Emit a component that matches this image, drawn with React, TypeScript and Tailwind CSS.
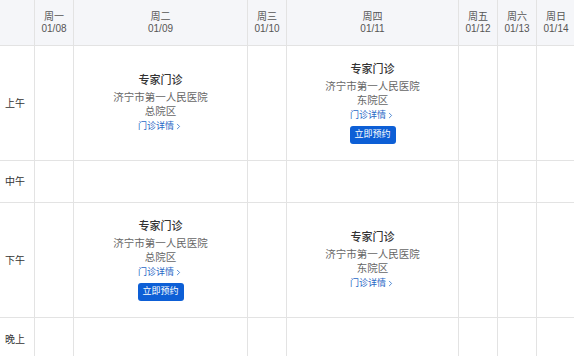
import { ChevronRight } from 'lucide-react';

interface Clinic {
  campus: string;
  canBook: boolean;
}

const days = [
  { name: '周一', date: '01/08' },
  { name: '周二', date: '01/09' },
  { name: '周三', date: '01/10' },
  { name: '周四', date: '01/11' },
  { name: '周五', date: '01/12' },
  { name: '周六', date: '01/13' },
  { name: '周日', date: '01/14' },
];

const slots = ['上午', '中午', '下午', '晚上'];

// schedule[slot][dayIndex]
const schedule: Record<string, Record<number, Clinic>> = {
  上午: {
    1: { campus: '总院区', canBook: false },
    3: { campus: '东院区', canBook: true },
  },
  下午: {
    1: { campus: '总院区', canBook: true },
    3: { campus: '东院区', canBook: false },
  },
};

const ClinicCell = ({ clinic }: { clinic: Clinic }) => (
  <div className="flex flex-col items-center text-center">
    <div className="text-[11px] leading-[14px] font-medium text-[#333] mb-[3px]">专家门诊</div>
    <div className="text-[10.5px] leading-[14px] text-[#666]">济宁市第一人民医院</div>
    <div className="text-[10.5px] leading-[14px] text-[#666]">{clinic.campus}</div>
    <div className="mt-[1px] flex items-center text-[9px] leading-[14px] text-[#1f67c6]">
      门诊详情
      <ChevronRight size={9} strokeWidth={2} />
    </div>
    {clinic.canBook && (
      <button className="mt-[4px] h-[18px] w-[46px] rounded-[3px] bg-[#0d5fd6] text-[9px] text-white">
        立即预约
      </button>
    )}
  </div>
);

const App = () => {
  return (
    <div
      className="w-[574px] h-[356px] overflow-hidden bg-white"
      style={{ fontFamily: '"Liberation Sans", "Noto Sans CJK SC", sans-serif' }}
    >
      <div className="grid w-[575px] grid-cols-[35px_39px_174px_39px_172px_39px_39px_39px] grid-rows-[46px_115px_42px_115px_43px]">
        {/* header */}
        <div className="bg-[#f5f6f9] border-r border-b border-[#e3e3e3]" />
        {days.map(d => (
          <div
            key={d.date}
            className="bg-[#f5f6f9] border-r border-b border-[#e3e3e3] flex flex-col items-center justify-center text-[10px] leading-[12px] text-[#555]"
          >
            <span>{d.name}</span>
            <span>{d.date}</span>
          </div>
        ))}

        {/* rows */}
        {slots.map(slot => (
          <div key={slot} className="contents">
            <div className="border-r border-b border-[#e3e3e3] flex items-center pl-[5px] text-[10px] text-[#333]">
              {slot}
            </div>
            {days.map((d, i) => {
              const clinic = schedule[slot]?.[i];
              return (
                <div key={d.date} className="border-r border-b border-[#e3e3e3] flex items-center justify-center">
                  {clinic && <ClinicCell clinic={clinic} />}
                </div>
              );
            })}
          </div>
        ))}
      </div>
    </div>
  );
};

export default App;
